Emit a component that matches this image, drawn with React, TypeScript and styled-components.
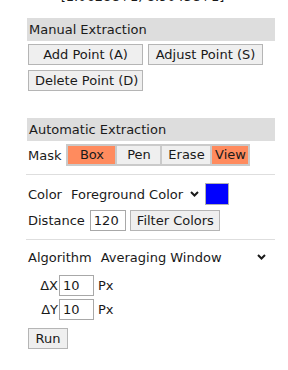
import React from 'react'
import styled, { createGlobalStyle } from 'styled-components'

const GlobalStyle = createGlobalStyle`
  html, body {
    margin: 0;
    padding: 0;
    background: #fff;
  }
  body {
    font-family: 'DejaVu Sans', Verdana, sans-serif;
    font-size: 13px;
    color: #1a1a1a;
    overflow: hidden;
  }
`

const Page = styled.div`
  width: 288px;
  height: 370px;
  overflow: hidden;
`

const Coordinates = styled.div`
  margin-top: -11px;
  height: 16px;
  line-height: 16px;
  text-align: center;
  padding-right: 3px;
`

const Panel = styled.div`
  margin: 13px 0 0 27px;
  width: 248px;
`

const SectionHeader = styled.div<{ $gap?: number }>`
  margin-top: ${(p) => p.$gap ?? 0}px;
  height: 23px;
  line-height: 23px;
  padding-left: 2px;
  background: #dddddd;
`

const ButtonGrid = styled.div`
  margin-top: 3px;
  display: grid;
  grid-template-columns: 115px 115px;
  column-gap: 5px;
  row-gap: 5px;
  padding-left: 1px;
`

const Button = styled.button<{ $width?: number }>`
  box-sizing: border-box;
  height: 21px;
  width: ${(p) => (p.$width ? `${p.$width}px` : 'auto')};
  padding: 0 6px;
  font: inherit;
  color: #1a1a1a;
  background: #efefef;
  border: 1px solid #b5b5b5;
  border-radius: 0;
  white-space: nowrap;
`

const Row = styled.div<{ $gap: number; $height?: number }>`
  display: flex;
  align-items: center;
  margin-top: ${(p) => p.$gap}px;
  height: ${(p) => p.$height ?? 21}px;
  padding-left: 1px;
`

const Label = styled.span<{ $space?: number }>`
  margin-right: ${(p) => p.$space ?? 5}px;
  white-space: nowrap;
`

const Segments = styled.div`
  display: flex;
  height: 22px;
`

const Segment = styled.div<{ $active?: boolean; $width: number }>`
  box-sizing: border-box;
  width: ${(p) => p.$width}px;
  height: 22px;
  line-height: 18px;
  text-align: center;
  background: ${(p) => (p.$active ? '#ff8b5e' : '#efefef')};
  border: 2px solid #cacaca;
  border-left-width: 1px;
  border-right-width: 1px;
  &:first-child {
    border-left-width: 2px;
  }
  &:last-child {
    border-right-width: 2px;
  }
`

const Divider = styled.div<{ $gap: number }>`
  margin-top: ${(p) => p.$gap}px;
  margin-left: -1px;
  height: 1px;
  background: #dedede;
`

const SelectLike = styled.div<{ $grow?: boolean }>`
  display: flex;
  align-items: center;
  justify-content: space-between;
  flex: ${(p) => (p.$grow ? 1 : '0 0 auto')};
  gap: 7px;
  padding-right: ${(p) => (p.$grow ? 9 : 0)}px;
  white-space: nowrap;
`

const Chevron = () => (
  <svg width="9" height="6" viewBox="0 0 9 6" aria-hidden="true">
    <path d="M1 1l3.5 3.5L8 1" fill="none" stroke="#1a1a1a" strokeWidth="2" />
  </svg>
)

const Swatch = styled.div`
  box-sizing: border-box;
  margin-left: 6px;
  width: 24px;
  height: 22px;
  border: 1px solid #b0b0b0;
  background: #0000ff;
`

const TextInput = styled.div<{ $width: number }>`
  box-sizing: border-box;
  width: ${(p) => p.$width}px;
  height: 21px;
  line-height: 19px;
  padding-left: 3px;
  border: 1px solid #a8a8a8;
  background: #fff;
`

const StepLabel = styled.span`
  width: 30px;
  margin-right: 1px;
  text-align: right;
`

const Unit = styled.span`
  margin-left: 4px;
`

export default function App() {
  return (
    <Page>
      <GlobalStyle />
      <Coordinates>[1.0628e+1, 8.9045e+1]</Coordinates>
      <Panel>
        <SectionHeader>Manual Extraction</SectionHeader>
        <ButtonGrid>
          <Button $width={115}>Add Point (A)</Button>
          <Button $width={115}>Adjust Point (S)</Button>
          <Button $width={115}>Delete Point (D)</Button>
        </ButtonGrid>

        <SectionHeader $gap={27}>Automatic Extraction</SectionHeader>
        <Row $gap={3} $height={22}>
          <Label>Mask</Label>
          <Segments>
            <Segment $active $width={50}>Box</Segment>
            <Segment $width={45}>Pen</Segment>
            <Segment $width={50}>Erase</Segment>
            <Segment $active $width={39}>View</Segment>
          </Segments>
        </Row>
        <Divider $gap={8} />

        <Row $gap={8} $height={22}>
          <Label $space={9}>Color</Label>
          <SelectLike>
            Foreground Color
            <Chevron />
          </SelectLike>
          <Swatch />
        </Row>
        <Row $gap={5}>
          <Label>Distance</Label>
          <TextInput $width={36}>120</TextInput>
          <Button style={{ marginLeft: 4 }} $width={90}>
            Filter Colors
          </Button>
        </Row>
        <Divider $gap={8} />

        <Row $gap={7} $height={20}>
          <Label $space={9}>Algorithm</Label>
          <SelectLike $grow>
            Averaging Window
            <Chevron />
          </SelectLike>
        </Row>
        <Row $gap={8} $height={20}>
          <StepLabel>ΔX</StepLabel>
          <TextInput $width={35}>10</TextInput>
          <Unit>Px</Unit>
        </Row>
        <Row $gap={4} $height={20}>
          <StepLabel>ΔY</StepLabel>
          <TextInput $width={35}>10</TextInput>
          <Unit>Px</Unit>
        </Row>
        <Row $gap={9}>
          <Button $width={40}>Run</Button>
        </Row>
      </Panel>
    </Page>
  )
}
